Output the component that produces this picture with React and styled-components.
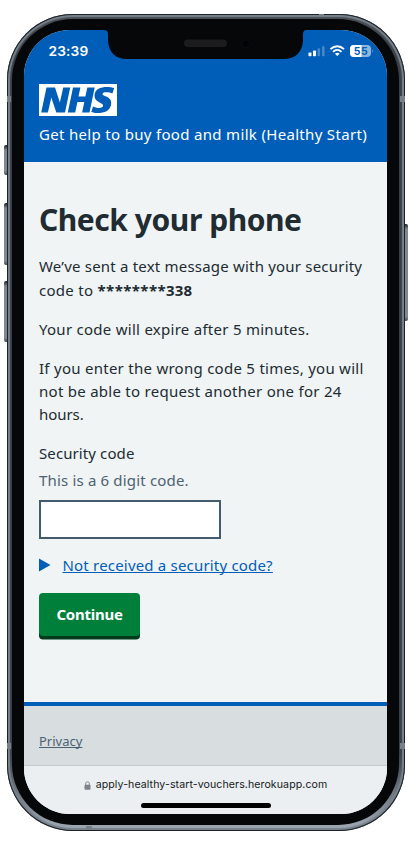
import React from "react";
import styled, { createGlobalStyle } from "styled-components";

const GlobalStyle = createGlobalStyle`
  *, *::before, *::after { box-sizing: border-box; }
  body { margin: 0; background: #fff; }
`;

const colors = {
  blue: "#005eb8",
  ink: "#212b32",
  muted: "#4c6272",
  page: "#f0f4f5",
  footer: "#d8dde0",
};

const Stage = styled.div`
  width: 409px;
  height: 845px;
  padding: 14px 3px 0 7px;
  overflow: hidden;
  font-family: "Noto Sans", "Open Sans", sans-serif;
  color: ${colors.ink};
`;

const Phone = styled.div`
  position: relative;
  width: 398px;
  height: 817px;
  padding: 5px 6px 6px 5px;
  border-radius: 66px;
  background: linear-gradient(180deg, #4b4f57 0, #3b4048 40px, #3b4048 740px, #a2acb8 817px);
  box-shadow: inset 0 0 0 1px #1d2229, inset 0 0 1px 3px #78828b;
`;

const SideButton = styled.div`
  position: absolute;
  ${(p) => (p.$right ? "right: -3px" : "left: -3px")};
  top: ${(p) => p.$top}px;
  width: 3px;
  height: ${(p) => p.$height}px;
  border-radius: ${(p) => (p.$right ? "0 2px 2px 0" : "2px 0 0 2px")};
  background: linear-gradient(180deg, #191c22 0, #7f8791 5px, #7f8791 calc(100% - 4px), #444a53 100%);
`;

const AntennaBand = styled.div`
  position: absolute;
  left: ${(p) => p.$left}px;
  top: ${(p) => p.$top}px;
  width: ${(p) => p.$width}px;
  height: ${(p) => p.$height}px;
  background: #777f87;
`;

const Bezel = styled.div`
  height: 100%;
  padding: 11px 12px 11px 12px;
  border-radius: 61px;
  background: #060708;
`;

const Screen = styled.div`
  position: relative;
  display: flex;
  flex-direction: column;
  width: 363px;
  height: 784px;
  overflow: hidden;
  border-radius: 46px;
  background: ${colors.page};
`;

const Notch = styled.svg`
  position: absolute;
  left: 79px;
  top: 0;
`;

const Header = styled.header`
  flex: none;
  height: 132px;
  background: ${colors.blue};
  color: #fff;
`;

const StatusBar = styled.div`
  display: flex;
  justify-content: space-between;
  align-items: center;
  height: 42px;
  padding: 0 13px 0 24.5px;
`;

const Clock = styled.span`
  font: 600 13.7px/20px Inter, sans-serif;
  letter-spacing: 0.15px;
`;

const Brand = styled.div`
  padding: 12px 0 0 15px;
`;

const Logo = styled.div`
  display: flex;
  align-items: center;
  justify-content: center;
  width: 78px;
  height: 32px;
  background: #fff;
`;

const Line = styled.span`
  display: block;
  height: ${(p) => p.$height || 23}px;
  font-size: ${(p) => p.$size || 15}px;
  line-height: ${(p) => p.$height || 23}px;
  font-weight: ${(p) => p.$weight || 400};
  letter-spacing: ${(p) => p.$track || 0}px;
  color: ${(p) => p.$color || "inherit"};
  white-space: pre;
`;

const ServiceName = styled(Line)`
  margin-top: 7px;
`;

const Strong = styled.b`
  font-weight: 700;
  letter-spacing: ${(p) => p.$track}px;
`;

const Main = styled.main`
  flex: 1;
  padding: 38px 0 0 15px;
`;

const Title = styled.h1`
  margin: 0 0 15px;
  height: 39px;
  font-size: 30px;
  line-height: 39px;
  font-weight: 700;
  letter-spacing: -0.45px;
  white-space: nowrap;
`;

const Paragraph = styled.p`
  margin: 0 0 15px;
`;

const Field = styled.label`
  display: block;
`;

const Hint = styled.span`
  display: block;
  padding-top: 4px;
`;

const CodeInput = styled.input`
  display: block;
  width: 182px;
  height: 39px;
  margin-top: 8px;
  border: 2px solid #425c6d;
  border-radius: 0;
  background: #fff;
  outline: none;
`;

const Disclosure = styled.div`
  display: flex;
  align-items: center;
  gap: 11.5px;
  margin-top: 14px;
  color: ${colors.blue};
`;

const Underlined = styled.a`
  text-decoration: underline;
  text-decoration-thickness: 1px;
  text-underline-offset: 1px;
  text-decoration-skip-ink: none;
  color: ${(p) => p.$color};
`;

const Button = styled.button`
  display: flex;
  align-items: center;
  justify-content: center;
  width: 101px;
  height: 43px;
  margin-top: 16px;
  padding: 0;
  border: 0;
  border-radius: 4px;
  background: #007f3b;
  box-shadow: 0 3.5px 0 #003b1c;
  color: #fff;
  font-family: inherit;
`;

const Footer = styled.footer`
  flex: none;
  height: 63px;
  padding: 24px 0 0 15px;
  border-top: 4px solid ${colors.blue};
  background: ${colors.footer};
`;

const BrowserBar = styled.div`
  flex: none;
  display: flex;
  flex-direction: column;
  align-items: center;
  height: 49px;
  padding-top: 10px;
  border-top: 1px solid #c5cace;
  background: #ebeff2;
`;

const Address = styled.div`
  display: flex;
  align-items: center;
  gap: 5px;
  height: 18px;
  font: 400 10.6px/18px Inter, sans-serif;
  letter-spacing: 0.08px;
  color: #17191b;
`;

const HomeIndicator = styled.div`
  width: 130px;
  height: 5px;
  margin-top: 9px;
  border-radius: 3px;
  background: #000;
`;

const BlackNotch = () => (
  <Notch width="210" height="30" viewBox="0 0 210 30">
    <path d="M0 0 C4 0 5 1 5 5 V11 C6 22 12 29 24 29 H180 C193 29 199 22 200 11 V5 C200 1 201 0 205 0 Z" fill="#060708" />
    <rect x="81" y="9.500" width="43" height="7.500" rx="3.750" fill="#1c1c1f" />
    <circle cx="143" cy="13.500" r="5" fill="#08080e" />
    <circle cx="142.800" cy="13.500" r="3" fill="#020204" />
  </Notch>
);

const NhsLogo = () => (
  <Logo aria-label="NHS">
    <svg width="78" height="32" viewBox="0 0 78 32" fill={colors.blue}>
      <path d="M7.500 3.500H16L20.900 18.500L24.200 3.500H31.200L26 28.500H17.300L12.300 13.500L8.900 28.500H2.200Z" />
      <path d="M34 3.500H41.400L39.500 12.600H46.400L48.300 3.500H55.700L50.500 28.500H43.100L45.300 18H38.400L36.200 28.500H28.800Z" />
      <path d="M75.200 4.100L73.400 9.500C71.600 8.700 69.700 8.200 67.300 8.200C64.900 8.200 63.500 8.700 63.500 10.100C63.500 12.900 72.200 12 72.200 18.900C72.200 26.500 65.200 29 58.500 29C56.200 29 53.700 28.500 52.300 28L54 22.400C55.600 23.300 58 23.900 60.100 23.900C62.300 23.900 64.100 23.300 64.100 21.500C64.100 18.300 55.500 18.700 55.500 11.700C55.500 5 62 3 67.700 3C70.800 3 73.500 3.400 75.200 4.100Z" />
    </svg>
  </Logo>
);

const StatusIcons = () => (
  <svg width="66" height="14" viewBox="0 0 66 14">
    <g fill="#fff">
      <rect x="0.500" y="8.500" width="3" height="3.700" rx="0.800" />
      <rect x="5" y="6.500" width="3" height="5.700" rx="0.800" />
      <rect x="9.500" y="4.200" width="2.600" height="8" rx="0.800" opacity="0.27" />
      <rect x="14" y="2.200" width="2.600" height="10" rx="0.800" opacity="0.27" />
    </g>
    <g fill="none" stroke="#fff" strokeWidth="1.900">
      <path d="M22.500 5.200C26.500 1.200 32 1.200 36 5.200" />
      <path d="M25 7.900C27.500 5.400 31 5.400 33.500 7.900" />
    </g>
    <path d="M26.900 9.700Q29.250 7.700 31.600 9.700L29.250 12.100Z" fill="#fff" />
    <rect x="42" y="1" width="21" height="12" rx="4" fill="#8db6de" />
    <path d="M46 1H53.500V13H46Q42 13 42 9V5Q42 1 46 1Z" fill="#fff" />
    <path d="M64 5.300Q65.500 7 64 8.700Z" fill="#8db6de" />
    <text x="45.700" y="10.900" fontFamily="Inter, sans-serif" fontSize="10.500" fontWeight="700" fill={colors.blue}>5</text>
    <text x="52.900" y="10.900" fontFamily="Inter, sans-serif" fontSize="10.500" fontWeight="700" fill={colors.blue}>5</text>
  </svg>
);

const LockIcon = () => (
  <svg width="7" height="9" viewBox="0 0 7 9">
    <rect x="0.500" y="3.700" width="6" height="5" rx="1" fill="#7f8387" />
    <path d="M1.700 4V2.500C1.700 0.300 5.300 0.300 5.300 2.500V4" fill="none" stroke="#7f8387" strokeWidth="1" />
  </svg>
);

const Triangle = () => (
  <svg width="12" height="14" viewBox="0 0 12 14">
    <path d="M0 0.500L11.500 7L0 13.500Z" fill={colors.blue} />
  </svg>
);

export default function App() {
  return (
    <>
      <GlobalStyle />
      <Stage>
        <Phone>
          <SideButton $top={131} $height={30} />
          <SideButton $top={189} $height={62} />
          <SideButton $top={267} $height={61} />
          <SideButton $right $top={210} $height={97} />
          <AntennaBand $left={0} $top={82} $width={4} $height={6} />
          <AntennaBand $left={393} $top={82} $width={5} $height={6} />
          <AntennaBand $left={0} $top={729} $width={4} $height={6} />
          <AntennaBand $left={393} $top={729} $width={5} $height={6} />
          <AntennaBand $left={79} $top={812} $width={6} $height={4} />
          <AntennaBand $left={312} $top={0} $width={5} $height={2} />
          <Bezel>
            <Screen>
              <Header>
                <StatusBar>
                  <Clock>23:39</Clock>
                  <StatusIcons />
                </StatusBar>
                <Brand>
                  <NhsLogo />
                  <ServiceName $track={0.32}>Get help to buy food and milk (Healthy Start)</ServiceName>
                </Brand>
              </Header>
              <BlackNotch />
              <Main>
                <Title>Check your phone</Title>
                <Paragraph>
                  <Line $height={24} $track={0.2}>We’ve sent a text message with your security</Line>
                  <Line $height={24} $track={0.28}>
                    code to <Strong $track={0.44}>********</Strong>
                    <Strong $track={0.1}>338</Strong>
                  </Line>
                </Paragraph>
                <Paragraph>
                  <Line $height={24} $track={0.27}>Your code will expire after 5 minutes.</Line>
                </Paragraph>
                <Paragraph>
                  <Line $height={24} $track={0.27}>If you enter the wrong code 5 times, you will</Line>
                  <Line $track={0.27}>not be able to request another one for 24</Line>
                  <Line $track={-0.05}>hours.</Line>
                </Paragraph>
                <Field>
                  <Line $height={24} $track={0.1}>Security code</Line>
                  <Hint>
                    <Line $track={0.17} $color={colors.muted}>This is a 6 digit code.</Line>
                  </Hint>
                  <CodeInput type="text" inputMode="numeric" />
                </Field>
                <Disclosure>
                  <Triangle />
                  <Line $height={24} $track={0.19}>
                    <Underlined $color={colors.blue}>Not received a security code?</Underlined>
                  </Line>
                </Disclosure>
                <Button>
                  <Line $weight={700} $track={-0.25}>Continue</Line>
                </Button>
              </Main>
              <Footer>
                <Line $size={13} $track={0}>
                  <Underlined $color={colors.muted}>Privacy</Underlined>
                </Line>
              </Footer>
              <BrowserBar>
                <Address>
                  <LockIcon />
                  apply-healthy-start-vouchers.herokuapp.com
                </Address>
                <HomeIndicator />
              </BrowserBar>
            </Screen>
          </Bezel>
        </Phone>
      </Stage>
    </>
  );
}
